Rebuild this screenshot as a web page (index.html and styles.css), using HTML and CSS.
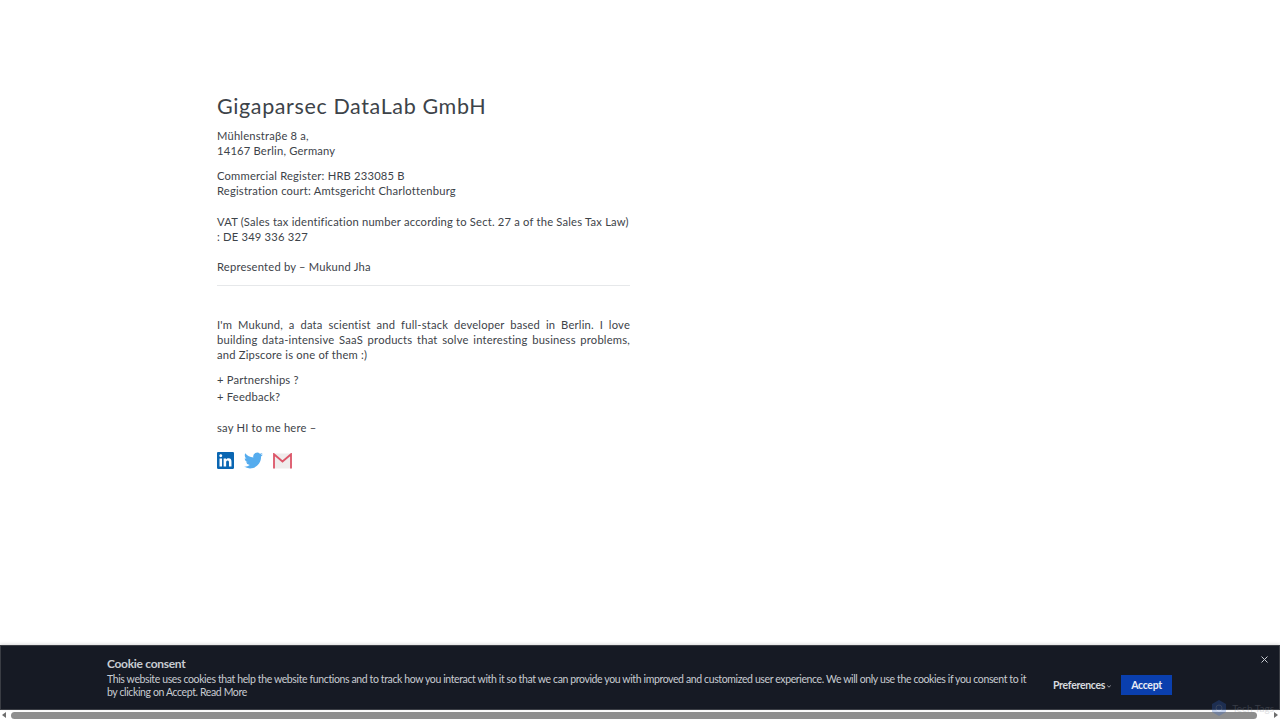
FILE: index.html
```html
<!DOCTYPE html>
<html lang="en">
<head>
    <meta charset="UTF-8">
    <meta name="viewport" content="width=device-width, initial-scale=1.0">
    <title>Impressum</title>
    <link rel="stylesheet" href="styles.css">
</head>
<body>
    <main class="content">
        <div class="container">
            <h1>Gigaparsec DataLab GmbH</h1>
            <p class="address">Mühlenstraβe 8 a,<br>14167 Berlin, Germany</p>
            <p class="register">Commercial Register: HRB 233085 B<br>Registration court: Amtsgericht Charlottenburg</p>
            <p class="vat">VAT (Sales tax identification number according to Sect. 27 a of the Sales Tax Law)<br>: DE 349 336 327</p>
            <p class="represented">Represented by – Mukund Jha</p>
            <hr>
            <p class="about">I'm Mukund, a data scientist and full-stack developer based in Berlin. I love building data-intensive SaaS products that solve interesting business problems, and Zipscore is one of them :)</p>
            <ul class="asks">
                <li>+ Partnerships ?</li>
                <li>+ Feedback?</li>
            </ul>
            <p class="hi">say HI to me here –</p>
            <div class="socials">
                <a href="#" class="social linkedin">
                    <svg width="17" height="17" viewBox="0 0 24 24"><path fill="#0a66b2" d="M20.447 20.452h-3.554v-5.569c0-1.328-.027-3.037-1.852-3.037-1.853 0-2.136 1.445-2.136 2.939v5.667H9.351V9h3.414v1.561h.046c.477-.9 1.637-1.85 3.37-1.85 3.601 0 4.267 2.37 4.267 5.455v6.286zM5.337 7.433c-1.144 0-2.063-.926-2.063-2.065 0-1.138.92-2.063 2.063-2.063 1.14 0 2.064.925 2.064 2.063 0 1.139-.925 2.065-2.064 2.065zm1.782 13.019H3.555V9h3.564v11.452zM22.225 0H1.771C.792 0 0 .774 0 1.729v20.542C0 23.227.792 24 1.771 24h20.451C23.2 24 24 23.227 24 22.271V1.729C24 .774 23.2 0 22.222 0h.003z"/></svg>
                </a>
                <a href="#" class="social twitter">
                    <svg width="19" height="17" viewBox="0 0 24 21" preserveAspectRatio="none"><path fill="#55acee" transform="translate(0,-1.5)" d="M23.953 4.57a10 10 0 01-2.825.775 4.958 4.958 0 002.163-2.723c-.951.555-2.005.959-3.127 1.184a4.92 4.92 0 00-8.384 4.482C7.69 8.095 4.067 6.13 1.64 3.162a4.822 4.822 0 00-.666 2.475c0 1.71.87 3.213 2.188 4.096a4.904 4.904 0 01-2.228-.616v.06a4.923 4.923 0 003.946 4.827 4.996 4.996 0 01-2.212.085 4.936 4.936 0 004.604 3.417 9.867 9.867 0 01-6.102 2.105c-.39 0-.779-.023-1.17-.067a13.995 13.995 0 007.557 2.209c9.053 0 13.998-7.496 13.998-13.985 0-.21 0-.42-.015-.63A9.935 9.935 0 0024 4.59z"/></svg>
                </a>
                <a href="#" class="social gmail">
                    <svg width="19" height="16" viewBox="0 0 19 16"><rect x="0.5" y="0.5" width="18" height="15" rx="1" fill="#efecec"/><path fill="none" stroke="#dc5568" stroke-width="1.8" d="M1 15.5V1.2L9.5 8.5 18 1.2v14.3"/></svg>
                </a>
            </div>
        </div>
    </main>

    <section class="cookie-bar">
        <div class="cookie-text">
            <h2>Cookie consent</h2>
            <p>This website uses cookies that help the website functions and to track how you interact with it so that we can provide you with improved and customized user experience. We will only use the cookies if you consent to it by clicking on Accept. <a href="#">Read More</a></p>
        </div>
        <div class="cookie-actions">
            <button class="btn-prefs">Preferences
                <svg class="caret" width="4" height="3" viewBox="0 0 4 3"><path fill="none" stroke="#d8dadf" stroke-width="0.7" d="M0.3 0.6L2 2.2 3.7 0.6"/></svg>
            </button>
            <button class="btn-accept">Accept</button>
        </div>
        <button class="cookie-close">
            <svg width="7" height="7" viewBox="0 0 7 7"><path stroke="#c8ccd2" stroke-width="1" d="M0.5 0.5l6 6M6.5 0.5l-6 6"/></svg>
        </button>
    </section>

    <div class="scrollbar">
        <span class="arrow arrow-left"></span>
        <div class="thumb"></div>
        <span class="arrow arrow-right"></span>
    </div>

    <div class="watermark">
        <svg width="14" height="16" viewBox="0 0 14 16"><path fill="#2f62c4" d="M7 0l7 4v8l-7 4-7-4V4z"/><circle cx="7" cy="8" r="3" fill="none" stroke="#8fb0ea" stroke-width="1"/></svg>
        <span>Tech Tags</span>
    </div>
</body>
</html>
```

FILE: styles.css
```css
* {
    box-sizing: border-box;
    margin: 0;
    padding: 0;
}

body {
    height: 100vh;
    display: flex;
    flex-direction: column;
    overflow: hidden;
    background: #fff;
    color: #3d4349;
    font-family: 'Lato', sans-serif;
    font-size: 11.2px;
    line-height: 15px;
}

.content {
    flex: 1;
    padding: 93px 0 0 217px;
}

.container {
    width: 413px;
    letter-spacing: 0.2px;
}

h1 {
    font-size: 21.5px;
    font-weight: 400;
    line-height: 26px;
    letter-spacing: 0.62px;
    margin-bottom: 9px;
}

.address {
    margin-bottom: 10px;
}

.register {
    margin-bottom: 16px;
}

.vat {
    margin-bottom: 15px;
}

hr {
    border: none;
    border-top: 1px solid #e6e8ea;
    margin: 11px 0 31px;
}

.about {
    text-align: justify;
    margin-bottom: 9px;
}

.asks {
    list-style: none;
    margin-bottom: 15px;
}

.asks li {
    line-height: 17px;
}

.hi {
    margin-bottom: 17px;
}

.socials {
    display: flex;
    align-items: center;
    gap: 10px;
}

.social {
    display: flex;
}

/* cookie banner */
.cookie-bar {
    height: 65px;
    flex-shrink: 0;
    display: flex;
    align-items: center;
    position: relative;
    padding-left: 106px;
    background: #161a24;
    border: 1px solid #3a3d44;
    box-shadow: 0 -1px 3px rgba(0, 0, 0, 0.15);
    color: #c8ccd2;
}

.cookie-text {
    width: 926px;
}

.cookie-text h2 {
    font-size: 12px;
    font-weight: 700;
    line-height: 15px;
    letter-spacing: -0.3px;
    margin-bottom: 2px;
}

.cookie-text p {
    font-size: 10.5px;
    line-height: 13px;
    letter-spacing: -0.38px;
}

.cookie-text a {
    color: inherit;
    text-decoration: none;
}

.cookie-actions {
    display: flex;
    align-items: center;
    margin: 14px 0 0 20px;
}

.btn-prefs,
.btn-accept {
    border: none;
    font-family: inherit;
    font-size: 10.5px;
    font-weight: 700;
    letter-spacing: -0.3px;
}

.btn-prefs {
    background: none;
    color: #d8dadf;
    width: 68px;
    text-align: left;
}

.caret {
    vertical-align: 1px;
}

.btn-accept {
    width: 51px;
    height: 20px;
    background: #0a3fae;
    color: #e8ecf5;
}

.cookie-close {
    position: absolute;
    top: 10px;
    right: 11px;
    display: flex;
    border: none;
    background: none;
}

/* horizontal scrollbar */
.scrollbar {
    height: 10px;
    flex-shrink: 0;
    display: flex;
    align-items: center;
    gap: 5px;
    padding: 0 2px;
}

.thumb {
    flex: 1;
    height: 7px;
    border-radius: 4px;
    background: #8e8e8e;
    margin-right: 12px;
}

.arrow {
    width: 0;
    height: 0;
    border-top: 3.5px solid transparent;
    border-bottom: 3.5px solid transparent;
}

.arrow-left {
    border-right: 4px solid #6e6e6e;
}

.arrow-right {
    border-left: 4px solid #6e6e6e;
}

.watermark {
    position: absolute;
    right: 6px;
    bottom: 4px;
    display: flex;
    align-items: center;
    gap: 6px;
    opacity: 0.28;
    color: #8a8f99;
    font-size: 10px;
}
```
